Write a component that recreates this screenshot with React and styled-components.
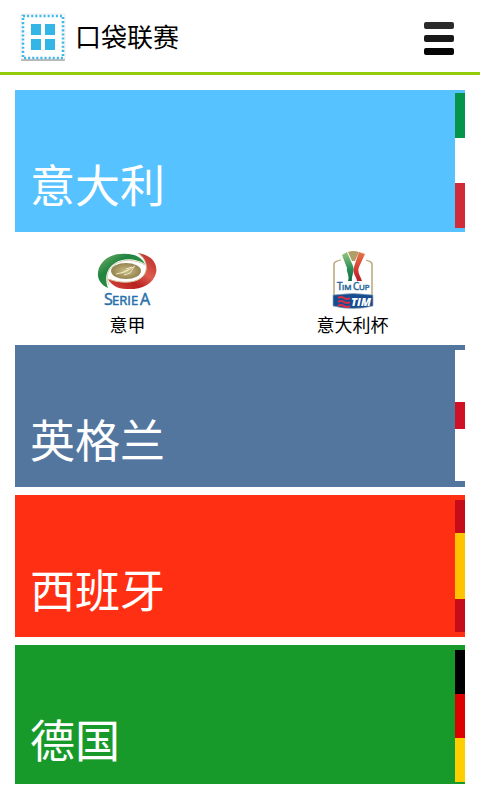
import React from "react";
import styled, { createGlobalStyle } from "styled-components";

const GlobalStyle = createGlobalStyle`
  *, *::before, *::after { box-sizing: border-box; }
  body {
    margin: 0;
    background: #fff;
    color: #000;
    font-family: "Noto Sans CJK SC", sans-serif;
  }
  button { font: inherit; color: inherit; border: 0; padding: 0; cursor: pointer; }
`;

const Header = styled.header`
  display: flex;
  align-items: center;
  gap: 8px;
  height: 75px;
  padding: 0 26px 0 19px;
  border-bottom: 3px solid #94cc0c;
`;

const AppIcon = styled.svg`
  width: 48px;
  height: 50px;
  flex: none;
`;

const Title = styled.h1`
  flex: 1;
  margin: 0;
  font-size: 26px;
  line-height: 36px;
  font-weight: 400;
`;

const MenuButton = styled.button`
  display: flex;
  flex-direction: column;
  gap: 6px;
  width: 30px;
  padding-top: 4px;
  background: none;
`;

const MenuBar = styled.span`
  height: 7px;
  border-radius: 2px;
  background: ${({ $tone }) => $tone};
`;

const CountryList = styled.main`
  display: flex;
  flex-direction: column;
  gap: 8px;
  padding: 15px 15px 16px;
`;

const Country = styled.section`
  display: flex;
  flex-direction: column;
`;

const CountryCard = styled.button`
  display: flex;
  align-items: stretch;
  justify-content: space-between;
  height: ${({ $height }) => $height}px;
  padding: ${({ $inset }) => $inset};
  background: ${({ $color }) => $color};
  color: #fff;
  text-align: left;
`;

const CountryName = styled.span`
  align-self: flex-end;
  padding-left: 15px;
  font-size: 45px;
  line-height: 80px;
  margin-bottom: ${({ $drop }) => $drop}px;
`;

const Flag = styled.span`
  display: flex;
  flex-direction: column;
  width: 10px;
`;

const Stripe = styled.span`
  flex: ${({ $weight }) => $weight};
  background: ${({ $color }) => $color};
`;

const Leagues = styled.div`
  display: grid;
  grid-template-columns: 1fr 1fr;
  padding-top: 15px;
`;

const League = styled.button`
  display: flex;
  flex-direction: column;
  align-items: center;
  background: none;
`;

const LeagueLogo = styled.svg`
  width: 64px;
  height: 64px;
`;

const LeagueName = styled.span`
  font-size: 18px;
  line-height: 26px;
`;

const LogoText = styled.text`
  font-family: "Open Sans", sans-serif;
  font-weight: ${({ $weight }) => $weight || 400};
  font-style: ${({ $slant }) => $slant || "normal"};
`;

function SerieALogo() {
  return (
    <LeagueLogo viewBox="0 0 64 64" aria-hidden="true">
      <defs>
        <linearGradient id="green" x1="0" y1="0" x2="1" y2="1">
          <stop offset="0" stopColor="#7db46b" />
          <stop offset=".35" stopColor="#1f8440" />
          <stop offset="1" stopColor="#3f9a4b" />
        </linearGradient>
        <linearGradient id="red" x1="1" y1="0" x2="0" y2="1">
          <stop offset="0" stopColor="#b52621" />
          <stop offset=".4" stopColor="#dd5d50" />
          <stop offset=".65" stopColor="#b8201f" />
          <stop offset="1" stopColor="#d8483e" />
        </linearGradient>
        <radialGradient id="gold">
          <stop offset="0" stopColor="#c9bd87" />
          <stop offset="1" stopColor="#968350" />
        </radialGradient>
      </defs>
      <path fill="url(#green)" d="M12 41C3 37 0 29 3 21C8 9 22 4 38 8C44 10 47 13 49 17C39 11 27 11 19 16C11 21 8 30 12 41Z" />
      <path fill="none" stroke="#d5cfab" strokeWidth="1" d="M13 38C9 29 12 22 19 17C27 12 39 12 49 18" />
      <path fill="url(#red)" d="M42 6C56 8 62 17 60 26C57 38 44 43 30 42C22 42 15 38 12 32C23 36 37 37 45 31C53 25 52 13 42 6Z" />
      <path fill="none" stroke="#d4ba94" strokeWidth="1" d="M12 32C23 36 37 37 45 31C53 25 52 13 42 6" />
      <ellipse cx="30" cy="24" rx="15" ry="8" fill="url(#gold)" />
      <path fill="none" stroke="#eee7c1" strokeWidth="1" d="M20 27L29 25L39 19M28 28L34 26L38 20M30 22L36 20M25 26L34 22" />
      <LogoText x="8" y="58" fontSize="16" fill="#2870ac" stroke="#2870ac" strokeWidth=".5">S</LogoText>
      <LogoText x="16" y="58" fontSize="13" fill="#2870ac" stroke="#2870ac" strokeWidth=".5">ERIE</LogoText>
      <LogoText x="44" y="58" fontSize="16" fill="#2870ac" stroke="#2870ac" strokeWidth=".5">A</LogoText>
    </LeagueLogo>
  );
}

function TimCupLogo() {
  return (
    <LeagueLogo viewBox="0 0 64 64" aria-hidden="true">
      <defs>
        <linearGradient id="frame" x1="0" x2="1">
          <stop offset="0" stopColor="#b7a678" />
          <stop offset=".5" stopColor="#e2dabb" />
          <stop offset="1" stopColor="#b7a678" />
        </linearGradient>
        <linearGradient id="cupGreen" x1="0" y1="0" x2="0" y2="1">
          <stop offset="0" stopColor="#9ac77e" />
          <stop offset=".6" stopColor="#278c55" />
          <stop offset="1" stopColor="#126a42" />
        </linearGradient>
        <linearGradient id="cupRed" x1="0" y1="0" x2="0" y2="1">
          <stop offset="0" stopColor="#e5764c" />
          <stop offset=".6" stopColor="#d83a30" />
          <stop offset="1" stopColor="#b21e2b" />
        </linearGradient>
      </defs>
      <path fill="#fff" stroke="url(#frame)" strokeWidth="1.5" d="M13 49V17Q13 13 32 11Q51 13 51 17V49Z" />
      <path fill="#fff" d="M20 7H45V19H20Z" />
      <path fill="#b29d69" d="M27 5Q32 3 38 5L34 14H31Z" />
      <path fill="url(#cupGreen)" d="M21 8L26 5L32 19C34 25 30 29 31 34H27C29 28 25 26 26 21Z" />
      <path fill="url(#cupRed)" d="M38 5L44 7L38 20C36 25 39 28 41 34H36C36 30 31 27 33 20Z" />
      <LogoText x="16" y="43" fontSize="10" fill="#2d6c9c" stroke="#2d6c9c" strokeWidth=".5">T</LogoText>
      <LogoText x="21" y="43" fontSize="8" fill="#2d6c9c" stroke="#2d6c9c" strokeWidth=".5">IM</LogoText>
      <LogoText x="32" y="43" fontSize="10" fill="#2d6c9c" stroke="#2d6c9c" strokeWidth=".5">C</LogoText>
      <LogoText x="38" y="43" fontSize="8" fill="#2d6c9c" stroke="#2d6c9c" strokeWidth=".5">UP</LogoText>
      <path fill="#164d90" stroke="#9aabba" strokeWidth=".7" d="M12 48Q32 45 52 48V59Q32 64 12 59Z" />
      <path fill="none" stroke="#dc2f47" strokeWidth="2" d="M17 51Q20 49 23 51T29 51M17 55Q20 53 23 55T29 55M17 59Q20 57 23 59T29 59" />
      <LogoText x="30" y="59" fontSize="11" fill="#fff" $weight={800} $slant="italic">TIM</LogoText>
    </LeagueLogo>
  );
}

const countries = [
  {
    name: "意大利", color: "#56c2ff", height: 142, inset: "3px 0 4px", drop: 4,
    stripes: [["#05954a", 1], ["#fff", 1], ["#cf2b38", 1]],
    leagues: [{ name: "意甲", Logo: SerieALogo }, { name: "意大利杯", Logo: TimCupLogo }],
  },
  {
    name: "英格兰", color: "#53769f", height: 142, inset: "5px 0 6px", drop: 2,
    stripes: [["#fff", 2], ["#d01025", 1], ["#fff", 2]],
  },
  {
    name: "西班牙", color: "#ff2f13", height: 142, inset: "5px 0", drop: 3,
    stripes: [["#c60b1a", 1], ["#ffc400", 2], ["#c60b1a", 1]],
  },
  {
    name: "德国", color: "#189a2b", height: 139, inset: "5px 0 2px", drop: 3,
    stripes: [["#000", 1], ["#dd0000", 1], ["#ffce00", 1]],
  },
];

export default function App() {
  return (
    <>
      <GlobalStyle />
      <Header>
        <AppIcon viewBox="0 0 48 50" aria-hidden="true">
          <rect x="2" y="5" width="44" height="45" rx="1" fill="#b4b4b4" />
          <rect x="2" y="3" width="44" height="45" rx="1" fill="#fff" stroke="#dedede" strokeWidth=".6" />
          <rect x="4" y="5" width="40" height="42" fill="none" stroke="#40b8e8" strokeWidth="2.6" strokeDasharray="2.1 2" />
          <path fill="#33b5e5" d="M12 13H22V24H12ZM26 13H36V24H26ZM12 28H22V39H12ZM26 28H36V39H26Z" />
        </AppIcon>
        <Title>口袋联赛</Title>
        <MenuButton type="button" aria-label="菜单">
          <MenuBar $tone="#2b2b2b" />
          <MenuBar $tone="#191919" />
          <MenuBar $tone="#050505" />
        </MenuButton>
      </Header>
      <CountryList>
        {countries.map(({ name, color, height, inset, drop, stripes, leagues }) => (
          <Country key={name}>
            <CountryCard type="button" $color={color} $height={height} $inset={inset}>
              <CountryName $drop={drop}>{name}</CountryName>
              <Flag aria-hidden="true">
                {stripes.map(([tone, weight], i) => (
                  <Stripe key={i} $color={tone} $weight={weight} />
                ))}
              </Flag>
            </CountryCard>
            {leagues && (
              <Leagues>
                {leagues.map(({ name: league, Logo }) => (
                  <League type="button" key={league}>
                    <Logo />
                    <LeagueName>{league}</LeagueName>
                  </League>
                ))}
              </Leagues>
            )}
          </Country>
        ))}
      </CountryList>
    </>
  );
}
